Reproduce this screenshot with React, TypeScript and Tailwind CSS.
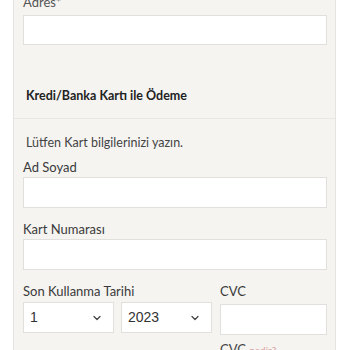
import { ChevronDown } from 'lucide-react';

function Field({ label, className = '' }: { label: string; className?: string }) {
  return (
    <div className={className}>
      <p className="text-[13px] leading-[16px] text-[#3a3a3a]">{label}</p>
      <div className="mt-[2px] h-[31px] border border-[#e2e0dc] bg-white" />
    </div>
  );
}

function SelectBox({ value }: { value: string }) {
  return (
    <div className="flex h-[31px] w-[91px] items-center justify-between border border-[#e2e0dc] bg-white pl-[6px] pr-[10px] font-['Liberation_Sans',Arial,sans-serif] text-[14px] text-[#333]">
      <span>{value}</span>
      <ChevronDown size={12} strokeWidth={2.5} className="text-[#444]" />
    </div>
  );
}

export default function App() {
  return (
    <div className="h-[350px] overflow-hidden bg-white font-['Lato','Noto_Sans',sans-serif] text-[#333]">
      <div className="-mt-[6px] ml-[13px] w-[323px] border-x border-[#e6e4e0] bg-[#f5f4f1]">
        <div className="pl-[9px] pr-[8px]">
          <p className="text-[13px] leading-[16px] text-[#555]">Adres*</p>
          <div className="mt-[5px] h-[30px] border border-[#e2e0dc] bg-white" />
        </div>
        <div className="border-b border-[#e9e7e3] px-[12px] pb-[14px] pt-[43px]">
          <h2 className="text-[12.5px] font-bold leading-[16px] text-[#222]">Kredi/Banka Kartı ile Ödeme</h2>
        </div>
        <div className="pb-4 pl-[9px] pr-[8px] pt-[16px]">
          <p className="pl-[3px] text-[12.5px] leading-[16px] text-[#444]">Lütfen Kart bilgilerinizi yazın.</p>
          <Field label="Ad Soyad" className="mt-[8px]" />
          <Field label="Kart Numarası" className="mt-[13px]" />
          <div className="mt-[13px] flex gap-[8px]">
            <div>
              <p className="text-[13px] leading-[16px] text-[#3a3a3a]">Son Kullanma Tarihi</p>
              <div className="mt-[3px] flex gap-[7px]">
                <SelectBox value="1" />
                <SelectBox value="2023" />
              </div>
            </div>
            <div className="flex-1">
              <p className="text-[13px] leading-[16px] text-[#3a3a3a]">CVC</p>
              <div className="mt-[5px] h-[31px] border border-[#e2e0dc] bg-white" />
              <p className="mt-[6px] text-[13px] leading-[16px] text-[#444]">
                CVC <span className="text-[10px] text-[#dba3a3]">nedir?</span>
              </p>
            </div>
          </div>
        </div>
      </div>
    </div>
  );
}
